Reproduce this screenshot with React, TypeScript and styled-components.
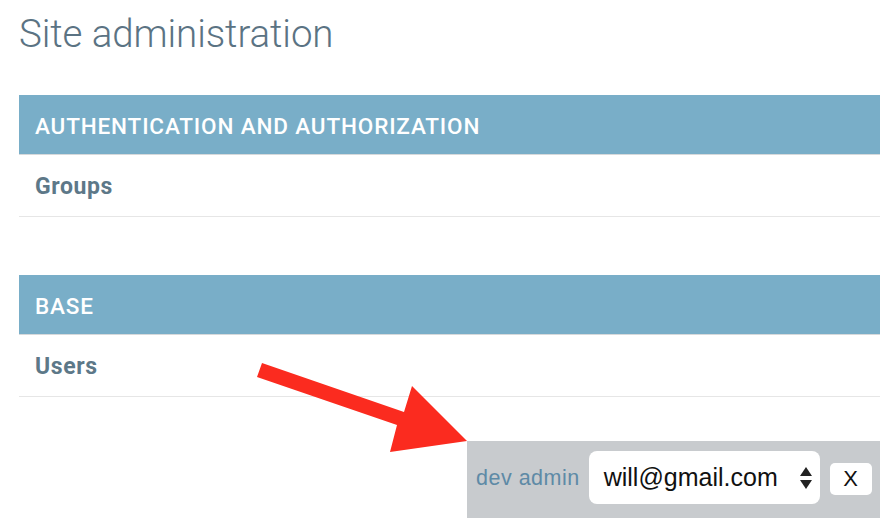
import React from "react";
import styled, { createGlobalStyle } from "styled-components";

const Global = createGlobalStyle`
  html, body { margin: 0; padding: 0; background: #fff; }
  body { font-family: Roboto, "Liberation Sans", sans-serif; overflow: hidden; }
  #root { width: 880px; height: 518px; position: relative; overflow: hidden; }
`;

const Page = styled.div`
  padding: 0 0 0 19px;
  display: flex;
  flex-direction: column;
`;

const Title = styled.h1`
  margin: 0;
  height: 95px;
  padding-top: 10px;
  box-sizing: border-box;
  font-family: Roboto, sans-serif;
  font-weight: 300;
  font-size: 38.5px;
  line-height: 48px;
  color: #5b7383;
  letter-spacing: -0.1px;
`;

const Module = styled.div`
  display: flex;
  flex-direction: column;
  margin-bottom: 58px;
`;

const Caption = styled.div`
  height: 60px;
  background: #79aec8;
  border-bottom: 1px solid #d6d9db;
  box-sizing: border-box;
  display: flex;
  align-items: center;
  padding: 3px 0 0 16px;
  color: #fff;
  font-family: Roboto, sans-serif;
  font-weight: 500;
  font-size: 22.5px;
  letter-spacing: 0.85px;
`;

const Row = styled.div`
  height: 62px;
  border-bottom: 1px solid #e6e6e6;
  box-sizing: border-box;
  display: flex;
  align-items: center;
  padding: 2px 0 0 16px;
  font-family: Roboto, sans-serif;
  font-weight: 700;
  font-size: 23px;
  letter-spacing: 0.6px;
  color: #5d7888;
`;

const Toolbar = styled.div`
  position: absolute;
  left: 467px;
  top: 441px;
  right: 0;
  bottom: 0;
  background: #c8cbce;
  display: flex;
  align-items: center;
  padding: 0 0 4px 9px;
  gap: 9px;
`;

const Label = styled.span`
  font-family: "Liberation Sans", Arial, sans-serif;
  font-size: 21.5px;
  color: #5e8aa6;
  letter-spacing: 0.5px;
  margin-top: 2px;
`;

const Select = styled.div`
  width: 231px;
  height: 53px;
  box-sizing: border-box;
  background: #fff;
  border-radius: 8px;
  display: flex;
  align-items: center;
  justify-content: space-between;
  padding: 0 8px 0 15px;
  font-family: "Liberation Sans", Arial, sans-serif;
  font-size: 25px;
  color: #111;
`;

const CloseButton = styled.div`
  width: 42px;
  height: 32px;
  margin: 3px 0 0 1px;
  box-sizing: border-box;
  background: #fff;
  border-radius: 5px;
  display: flex;
  align-items: center;
  justify-content: center;
  font-family: "Liberation Sans", Arial, sans-serif;
  font-size: 22px;
  color: #111;
`;

const Arrow = styled.svg`
  position: absolute;
  left: 0;
  top: 0;
  pointer-events: none;
`;

const Updown = () => (
  <svg width="12" height="22" viewBox="0 0 12 22">
    <path d="M6 0 L12 9 L0 9 Z" fill="#222" />
    <path d="M0 13 L12 13 L6 22 Z" fill="#222" />
  </svg>
);

export default function App() {
  return (
    <>
      <Global />
      <Page>
        <Title>Site administration</Title>
        <Module>
          <Caption>AUTHENTICATION AND AUTHORIZATION</Caption>
          <Row>Groups</Row>
        </Module>
        <Module>
          <Caption>BASE</Caption>
          <Row>Users</Row>
        </Module>
      </Page>
      <Toolbar>
        <Label>dev admin</Label>
        <Select>
          <span>will@gmail.com</span>
          <Updown />
        </Select>
        <CloseButton>X</CloseButton>
      </Toolbar>
      <Arrow width="880" height="518" viewBox="0 0 880 518">
        <polygon
          points="262,363 404,412 412,386 467,441 390,452 397,425 257,377"
          fill="#fb2b1f"
        />
      </Arrow>
    </>
  );
}
